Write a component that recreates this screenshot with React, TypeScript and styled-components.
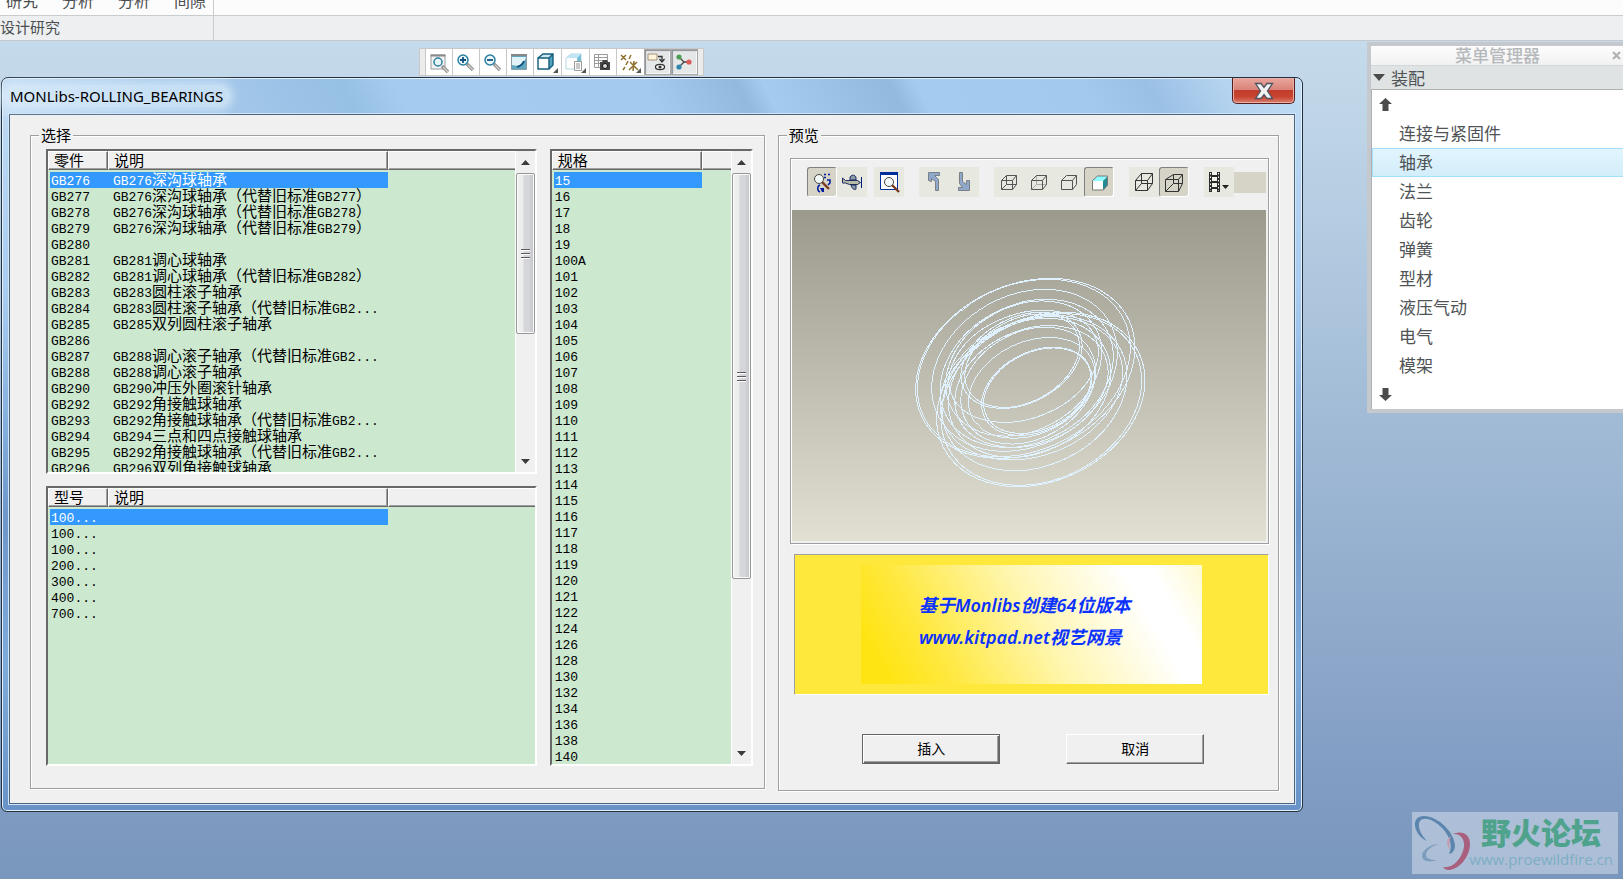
import React from "react";
import styled, { createGlobalStyle, css } from "styled-components";

const uiFont = `"Noto Sans", "Noto Sans CJK SC", sans-serif`;
const cjkFont = `"Noto Sans CJK SC", sans-serif`;

const GlobalStyle = createGlobalStyle`
  *, *::before, *::after { box-sizing: border-box; }
  body { margin: 0; font-family: ${cjkFont}; }
  button { font: inherit; color: inherit; padding: 0; margin: 0; border: 0; background: none; }
`;

/* ---------- page ---------- */

const Page = styled.div`
  position: relative;
  display: flex;
  flex-direction: column;
  min-height: 100vh;
  overflow: hidden;
  background: linear-gradient(#c8dded 0%, #c0d6e8 12%, #a1bbd6 48%, #829dc3 88%, #7996bc 100%);
`;

const Ribbon = styled.header`
  flex: none;
  color: #4c4f52;
  background: #edeff1;
  border-bottom: 1px solid #c5c8ca;
`;

const RibbonRow = styled.div<{ $upper?: boolean }>`
  display: flex;
  overflow: hidden;
  height: ${(p) => (p.$upper ? 16 : 24)}px;
  background: ${(p) => (p.$upper ? "#fcfcfc" : "#edeff1")};
  border-bottom: ${(p) => (p.$upper ? "1px solid #c9cbcd" : "0")};
`;

const RibbonGroup = styled.div<{ $upper?: boolean }>`
  display: flex;
  width: 214px;
  gap: 24px;
  align-items: ${(p) => (p.$upper ? "flex-end" : "center")};
  padding: ${(p) => (p.$upper ? "0 0 7px 6px" : "0 0 2px")};
  border-right: 1px solid #c9cbcd;
  font-size: ${(p) => (p.$upper ? 16 : 15)}px;
  line-height: 16px;
  white-space: nowrap;
`;

const Desktop = styled.main`
  display: flex;
  align-items: flex-start;
  gap: 64px;
  padding-left: 1px;
`;

const Workspace = styled.div`
  flex: 1;
  min-width: 0;
  padding-top: 7px;
`;

/* ---------- view toolbar ---------- */

const ViewBar = styled.div`
  display: flex;
  width: max-content;
  height: 28px;
  margin: 0 0 1px 418px;
  padding: 0 5px 0 5px;
  background: #ececec;
  border: 1px solid #c8c8c8;
`;

const ViewButton = styled.button<{ $on?: boolean; $menu?: boolean }>`
  display: grid;
  place-items: center;
  width: ${(p) => (p.$menu ? 28 : 27)}px;
  height: 26px;
  background: #fff;
  border-left: 1px solid #c8c8c8;
  ${(p) =>
    p.$on &&
    css`
      background: #e6e7e8;
      border: 1px solid #a6a9ac;
      box-shadow: inset 1px 1px 1px #8b8e91, inset 0 0 0 1px #f7f7f7;
    `}
`;

/* ---------- dialog window ---------- */

const Dialog = styled.section`
  padding: 0 7px 7px;
  border: 1px solid #22303f;
  border-radius: 7px 7px 6px 6px;
  box-shadow: inset 0 0 0 1px #e4f1fc;
  background:
    linear-gradient(62deg, #c6def4 0%, #a9cbec 12%, #97c0e5 27%, #a5cbf0 31%, #a4caef 50%, #93b9de 57%, #a4cbf0 59%,
      #93b9de 68.5%, #a4cbf0 70.5%, #a4c9ef 83%, #9ac0e6 88%, #b5d4ef 94%, #c0dcf5 100%) top / 100% 38px no-repeat,
    linear-gradient(#c0dbf4 0%, #a9cbee 30%, #84addc 48%, #6d97c9 60%, #7fabdb 80%, #6993c7 100%);
`;

const TitleBar = styled.header`
  display: flex;
  justify-content: space-between;
  align-items: flex-start;
  height: 36px;
`;

const Title = styled.h1`
  margin: 7px 0 0 -6px;
  padding: 0 7px;
  border-radius: 12px;
  font: 400 15px/22px ${uiFont};
  color: #000;
  background: rgba(222, 238, 251, 0.6);
  box-shadow: 0 0 8px 4px rgba(222, 238, 251, 0.6);
`;

const CloseButton = styled.button`
  display: grid;
  place-items: center;
  width: 63px;
  height: 26px;
  border: 1px solid #561d1b;
  border-top: 0;
  border-radius: 0 0 5px 5px;
  box-shadow: inset 0 0 0 1px #e8b0a8;
  background: linear-gradient(#e9a79c 0%, #d9837a 46%, #bf3d2a 50%, #c94430 75%, #d98070 100%);
`;

const Client = styled.div`
  display: flex;
  align-items: flex-start;
  gap: 13px;
  padding: 12px 15px 12px 20px;
  background: #f0f0f0;
  border: 1px solid #4d6480;
  box-shadow: 0 0 0 1px #cfe4f7;
`;

const Group = styled.fieldset<{ $grow: number }>`
  flex: ${(p) => p.$grow} 1 0;
  min-width: 0;
  margin: 0;
  padding: 0;
  border: 1px solid #a0a0a0;
  box-shadow: inset 1px 1px #fff, 1px 1px #fff;
`;

const Legend = styled.legend`
  margin-left: 8px;
  padding: 0 2px;
  background: #f0f0f0;
  font-size: 15px;
  line-height: 16px;
`;

const Lists = styled.div`
  display: flex;
  gap: 13px;
  padding: 6px 11px 22px 15px;
`;

const ListStack = styled.div`
  display: flex;
  flex: 1;
  min-width: 0;
  flex-direction: column;
  gap: 12px;
`;

const ListBox = styled.div<{ $size: "tall" | "medium" | "short" }>`
  display: flex;
  overflow: hidden;
  flex: none;
  width: ${(p) => (p.$size === "tall" ? "203px" : "auto")};
  height: ${(p) => ({ tall: 617, medium: 325, short: 280 })[p.$size]}px;
  background: #cce8cf;
  border: 2px solid;
  border-color: #696969 #fff #fff #696969;
`;

const ListPane = styled.div`
  flex: 1;
  min-width: 0;
  overflow: hidden;
`;

const Table = styled.table`
  width: 100%;
  table-layout: fixed;
  border-collapse: separate;
  border-spacing: 0;
  font-size: 15px;
  line-height: 16px;
  color: #000;
  tbody::before {
    content: "";
    display: block;
    height: 2px;
  }
`;

const HeadCell = styled.th<{ $width?: number }>`
  width: ${(p) => (p.$width ? `${p.$width}px` : "auto")};
  height: 19px;
  padding: 0 5px 1px;
  font-weight: 400;
  text-align: left;
  background: #f0f0f0;
  border: 1px solid;
  border-color: #fff #696969 #696969 #fff;
  box-shadow: inset -1px -1px #a0a0a0;
  &:last-child {
    border-right: 0;
    box-shadow: inset 0 -1px #a0a0a0;
  }
`;

const Cell = styled.td<{ $selected?: boolean; $fill?: boolean }>`
  height: 16px;
  padding: 0 0 2px 5px;
  line-height: 14px;
  white-space: nowrap;
  &:first-child {
    padding-left: 1px;
    border-left: 2px solid #cce8cf;
  }
  ${(p) =>
    p.$selected &&
    !p.$fill &&
    css`
      color: #fff;
      background: #3399ff;
    `}
`;

const Latin = styled.span`
  font: 13px/0 "Liberation Mono", monospace;
`;

const ScrollTrack = styled.div`
  display: flex;
  flex-direction: column;
  flex: none;
  width: 20px;
  background: #f0f0f0;
  border-left: 1px solid #fff;
`;

const ScrollArrow = styled.button<{ $down?: boolean }>`
  display: grid;
  place-items: center;
  height: 22px;
  flex: none;
  margin-top: ${(p) => (p.$down ? "auto" : "0")};
  svg {
    transform: ${(p) => (p.$down ? "rotate(180deg)" : "none")};
  }
`;

const ScrollThumb = styled.div<{ $height: number }>`
  display: grid;
  place-items: center;
  flex: none;
  height: ${(p) => p.$height}px;
  border: 1px solid #979797;
  border-radius: 2px;
  box-shadow: inset 0 0 0 1px #fafafa;
  background: linear-gradient(90deg, #f3f3f3 0%, #ebebec 35%, #d6d7da 42%, #d3d5d9 70%, #c2c4c9 100%);
`;

/* ---------- preview ---------- */

const Preview = styled.div`
  padding: 15px 9px 26px 11px;
`;

const PreviewFrame = styled.div`
  padding: 0 2px 2px 1px;
  border: 1px solid #a0a0a0;
  box-shadow: inset 1px 1px #fff, 1px 1px #fff;
`;

const PreviewBar = styled.div`
  display: flex;
  gap: 15px;
  height: 51px;
  padding: 8px 0 0 15px;
`;

const ToolSet = styled.div<{ $tight?: boolean }>`
  display: flex;
  flex: none;
  margin-right: ${(p) => (p.$tight ? "-8px" : "0")};
`;

const ToolButton = styled.button<{ $on?: boolean }>`
  display: grid;
  place-items: center;
  width: 30px;
  height: 30px;
  background: #e7e8df;
  ${(p) =>
    p.$on &&
    css`
      background: #d6d3c7;
      border: 1px solid;
      border-color: #808080 #fff #fff #808080;
      border-radius: 3px;
    `}
`;

const BarFiller = styled.div`
  flex: 1;
  height: 21px;
  margin: 5px 0 0 -15px;
  background: #d6d3c7;
`;

const Viewport = styled.div`
  display: flex;
  justify-content: center;
  height: 331px;
  background: linear-gradient(#9b9a8d, #e2dfd3);
`;

const Banner = styled.div`
  display: grid;
  place-items: center;
  height: 141px;
  margin: 10px 0 39px 4px;
  background: #ffe83c;
  border: 1px solid;
  border-color: #a0a0a0 #fff #fff #a0a0a0;
`;

const BannerText = styled.p`
  width: 72%;
  height: 119px;
  margin: 0;
  padding: 24px 0 0 58px;
  font: italic 600 18px/32px ${uiFont};
  color: #0a32ff;
  white-space: nowrap;
  background: linear-gradient(60deg, #ffe414 8%, #ffe83c 22%, #fff6b0 52%, #ffffff 80%, #ffffff 87%, #fffad0 100%);
`;

const Actions = styled.div`
  display: flex;
  justify-content: center;
  gap: 66px;
  padding-left: 8px;
`;

const PushButton = styled.button<{ $primary?: boolean }>`
  width: 138px;
  height: 30px;
  padding-bottom: 2px;
  font-size: 14px;
  background: #f0f0f0;
  border: 1px solid;
  border-color: #fff #696969 #696969 #fff;
  box-shadow: inset -1px -1px #a0a0a0;
  ${(p) =>
    p.$primary &&
    css`
      border-color: #646464;
      box-shadow: inset 1px 1px #fff, inset -1px -1px #696969, inset -2px -2px #a0a0a0;
    `}
`;

/* ---------- menu manager ---------- */

const MenuPanel = styled.aside`
  flex: none;
  width: 256px;
  margin-top: 1px;
  border: 4px solid #c5c9cd;
  border-right: 0;
  color: #505356;
  font-size: 17px;
  line-height: 20px;
`;

const MenuTitle = styled.header`
  display: flex;
  align-items: center;
  justify-content: space-between;
  height: 20px;
  padding: 0 2px 1px 84px;
  color: #b6b9bc;
  font-weight: 500;
  background: linear-gradient(#fdfdfd, #f1f1f1);
  border-bottom: 1px solid #d3d7d9;
  h2 {
    margin: 0;
    font: inherit;
  }
  button {
    display: grid;
  }
`;

const MenuSection = styled.h3`
  display: flex;
  align-items: center;
  gap: 6px;
  height: 24px;
  margin: 0;
  padding-left: 2px;
  font: inherit;
  background: #dfe3e4;
  border-bottom: 1px solid #aeb1b3;
`;

const MenuBody = styled.div`
  background: #fff;
  border-left: 1px solid #aeb1b3;
`;

const MenuScroll = styled.button`
  display: flex;
  align-items: center;
  width: 100%;
  height: 29px;
  padding: 0 0 1px 7px;
`;

const MenuItem = styled.button<{ $active?: boolean }>`
  display: block;
  width: 100%;
  height: 29px;
  padding: 0 0 2px 26px;
  text-align: left;
  border: 1px solid transparent;
  border-right: 0;
  ${(p) =>
    p.$active &&
    css`
      border-color: #a3e0fb;
      background: linear-gradient(#e2f5fe, #d2edfa);
    `}
`;

/* ---------- watermark ---------- */

const Watermark = styled.a`
  position: absolute;
  right: 5px;
  bottom: 5px;
  display: flex;
  width: 206px;
  height: 62px;
  text-decoration: none;
  background: rgba(205, 217, 232, 0.6);
`;

const WatermarkText = styled.span`
  position: absolute;
  right: 5px;
  top: 1px;
  display: flex;
  flex-direction: column;
  align-items: flex-end;
`;

const WatermarkName = styled.strong`
  margin-right: 12px;
  font: 900 30px/36px ${cjkFont};
  color: #4fa38c;
`;

const WatermarkUrl = styled.span`
  font: 400 15px/20px "Open Sans", sans-serif;
  color: #7caec4;
`;

/* ---------- icons ---------- */

const Corner = () => <path d="M25 24v-5l-5 5z" fill="#555" />;

const Lens = ({ x = 0, y = 0, r = 5 }: { x?: number; y?: number; r?: number }) => (
  <g transform={`translate(${x} ${y})`}>
    <path d="M4 4l6 6" stroke="#8d8d8d" strokeWidth="3.4" />
    <path d="M5 5l5 5" stroke="#d4d0cb" strokeWidth="1.4" />
    <circle r={r} fill="#eaf7fb" stroke="#2b7f9f" strokeWidth="1.5" />
  </g>
);

const viewIcons: { label: string; on?: boolean; menu?: boolean; art: React.ReactNode }[] = [
  {
    label: "重新调整",
    art: (
      <>
        <path d="M6 6h14v14H6z" fill="#f4f4f4" stroke="#9a9a9a" />
        <path d="M5.500 6.500h15" stroke="#888" strokeWidth="2" />
        <Lens x={13} y={13} r={4} />
      </>
    ),
  },
  {
    label: "放大",
    art: (
      <>
        <Lens x={11} y={11} />
        <path d="M8 11h6M11 8v6" stroke="#124f7c" strokeWidth="1.8" />
      </>
    ),
  },
  {
    label: "缩小",
    art: (
      <>
        <Lens x={11} y={11} />
        <path d="M8 11h6" stroke="#124f7c" strokeWidth="1.8" />
      </>
    ),
  },
  {
    label: "重画",
    art: (
      <>
        <path d="M5.500 5.500h15v15h-15z" fill="#5fa8c2" stroke="#8b9ba3" />
        <path d="M6 8h14c-1 5-5 8-8 9l-6-1z" fill="#e1f3f8" />
        <path d="M5 6h16" stroke="#888" strokeWidth="2" />
        <path d="M18 12c-1 3-4 5-7 6" fill="none" stroke="#124f7c" strokeWidth="2" />
      </>
    ),
  },
  {
    label: "显示样式",
    menu: true,
    art: (
      <>
        <path d="M5 9l5-4h10v11l-4 4H5z" fill="#cdeaf4" />
        <path d="M16 9l4-4v11l-4 4z" fill="#55a5c0" />
        <path d="M5 9h11v11H5z" fill="#fff" />
        <path d="M5 9h11v11H5zM5 9l5-4h10v11l-4 4M16 9l4-4" fill="none" stroke="#155d7c" strokeWidth="1.4" />
        <Corner />
      </>
    ),
  },
  {
    label: "已保存方向",
    menu: true,
    art: (
      <>
        <path d="M5 9l5-4h10v11l-4 4H5z" fill="#fff" stroke="#b4d5e4" />
        <path d="M5 9l5-4h10l-4 4z" fill="#bfe6f2" />
        <path d="M16 9l4-4v11l-4 3z" fill="#79bfd6" />
        <path d="M13.500 12.500h7v9h-7z" fill="#fff" stroke="#9a9a9a" />
        <path d="M15 15h4M15 17h4M15 19h4" stroke="#777" strokeWidth="0.8" />
        <Corner />
      </>
    ),
  },
  {
    label: "视图管理器",
    art: (
      <>
        <path d="M5.500 5.500h13v13h-13z" fill="#fff" stroke="#9a9a9a" />
        <path d="M5 8.500h14M5 11.500h14M5 14.500h14M9.500 5v13" stroke="#9a9a9a" />
        <path d="M11 13h2l1-2h4l1 2h2v8H11z" fill="#444" />
        <circle cx="16" cy="17" r="2.5" fill="#ddd" stroke="#111" />
      </>
    ),
  },
  {
    label: "基准显示",
    menu: true,
    art: (
      <>
        <path
          d="M5 6l5 5M10 6l-5 5M15 6l-2 4M12 12l-2 4M9 18l-2 3M14 13l8 8M21 13l-8 8M18 12l-1 10"
          stroke="#8f6f2c"
          strokeWidth="1.5"
        />
        <Corner />
      </>
    ),
  },
  {
    label: "注释显示",
    on: true,
    art: (
      <>
        <path d="M5 5h9v6H5z" fill="#fff4da" stroke="#a4917a" />
        <path d="M15 7.500h4v4M16.500 10l2.500 3 2.500-3" fill="none" stroke="#333" strokeWidth="1.3" />
        <ellipse cx="17" cy="18" rx="4.5" ry="2.6" fill="#fff" stroke="#333" strokeWidth="1.3" />
        <circle cx="17" cy="18" r="1.6" fill="#333" />
      </>
    ),
  },
  {
    label: "旋转中心",
    on: true,
    art: (
      <>
        <path d="M9 8l5 5-5 5M14 13h6" fill="none" stroke="#444" strokeWidth="1.3" />
        <circle cx="9" cy="8" r="2.6" fill="#4d9d55" />
        <circle cx="19" cy="13" r="2.6" fill="#dd5b5b" />
        <circle cx="9" cy="18" r="2.6" fill="#2f86ad" />
      </>
    ),
  },
];

const wire = { fill: "none", stroke: "#555", strokeWidth: 1 } as const;
const cubeOutline = "M7.500 13.500h11v9h-11zM7.500 13.500l5-5h10v9l-4 5M18.500 13.500l4-5";

const BrownLens = ({ x, y }: { x: number; y: number }) => (
  <g transform={`translate(${x} ${y})`}>
    <path d="M3 3l7 7" stroke="#7a3a22" strokeWidth="2.4" />
    <circle r="4.5" fill="#f4faf6" stroke="#444" />
  </g>
);

type Tool = { label: string; on?: boolean; art: React.ReactNode };
const toolSets: Tool[][] = [
  [
    {
      label: "动态缩放",
      on: true,
      art: (
        <>
          <path
            d="M17 7.500h2M21 7.500h2M17 10.500h2M20 13h3v3l-2 2M13 18c-3 1-3 6 0 7"
            fill="none"
            stroke="#001a9c"
            strokeWidth="1.5"
          />
          <path d="M13 21h4v4h-2z" fill="#001a9c" />
          <BrownLens x={12} y={12} />
        </>
      ),
    },
    {
      label: "飞行模式",
      art: (
        <>
          <path d="M5.500 11v5h3l4 1.500h8l3-2-3-2h-12z" fill="#b8bba8" stroke="#1c2b63" />
          <path d="M13 10c2-3 6-2 6 1v2h-6zM14 18h5v4c0 1-4 1-5-4z" fill="#8b9aa6" stroke="#1c2b63" />
          <path d="M24.500 10v11" stroke="#001a7c" />
        </>
      ),
    },
  ],
  [
    {
      label: "重新调整",
      art: (
        <>
          <path d="M6.500 6h17v16.500h-17z" fill="#fff" stroke="#002f9c" />
          <path d="M6 6.500h18" stroke="#002f9c" strokeWidth="3" />
          <BrownLens x={15} y={15} />
        </>
      ),
    },
  ],
  [
    { label: "上一个", art: <path d="M9.500 5.500h11v3h-5l4 4v11h-3v-9l-4-3v3l-3-1z" fill="#8fa8cb" stroke="#7b7f86" /> },
    { label: "下一个", art: <path d="M10.500 5.500h3v9l4 3v-4h3v10h-11v-3h4l-3-4z" fill="#8fa8cb" stroke="#7b7f86" /> },
  ],
  [
    { label: "线框", art: <path d={`${cubeOutline}M12.500 8.500v9h10M7.500 22.500l5-5`} {...wire} /> },
    {
      label: "隐藏线",
      art: (
        <>
          <path d="M12.500 8.500v9h10M7.500 22.500l5-5" fill="none" stroke="#aaa" />
          <path d={cubeOutline} {...wire} />
        </>
      ),
    },
    { label: "无隐藏线", art: <path d={cubeOutline} {...wire} /> },
    {
      label: "着色",
      on: true,
      art: (
        <>
          <path d="M8 14l5-5h11l-5 5z" fill="#8ffcff" />
          <path d="M19 14l5-5v9l-5 5z" fill="#218c94" />
          <path d="M8 14h11v9H8z" fill="#fff" />
          <path d="M8.500 13.500l5-4.500h10v9l-4 5h-11z" fill="none" stroke="#777" />
        </>
      ),
    },
  ],
  [
    {
      label: "正交",
      art: (
        <path
          d="M6.500 13.500h12v10h-12zM12.500 6.500h11v10h-11zM6.500 13.500l6-7M18.500 13.500l5-7M6.500 23.500l6-7M18.500 23.500l5-7"
          {...wire}
          stroke="#333"
        />
      ),
    },
    {
      label: "透视",
      on: true,
      art: (
        <path
          d="M6.500 12.500h13v12h-13zM14.500 7.500h9v9h-9zM6.500 12.500l8-5M19.500 12.500l4-5M6.500 24.500l8-8M19.500 24.500l4-8"
          {...wire}
          stroke="#333"
        />
      ),
    },
  ],
  [
    {
      label: "动画",
      art: (
        <>
          <path d="M5 5h11v20H5z" fill="#2b2b2b" />
          <path d="M8 5h5v3H8zM8 10h5v4H8zM8 16h5v4H8zM8 22h5v3H8z" fill="#f2f2e8" />
          <path d="M6.500 6v18M14.500 6v18" stroke="#fff" strokeDasharray="1.5 2" />
          <path d="M18 18h7l-3.500 4z" fill="#222" />
        </>
      ),
    },
  ],
];

/* Each ring: left, right, top and bottom extents and the tilt correlation. */
const rings: number[][] = [
  [107, 765, 85, 625, 0.23],
  [112, 751, 88, 620, 0.23],
  [155, 712, 118, 604, 0.22],
  [180, 700, 148, 592, 0.23],
  [197, 665, 153, 558, 0.24],
  [207, 655, 181, 517, 0.26],
  [243, 606, 187, 475, 0.32],
  [255, 598, 192, 472, 0.32],
  [170, 795, 187, 710, 0.22],
  [183, 785, 191, 706, 0.22],
  [186, 741, 196, 662, 0.22],
  [180, 728, 200, 630, 0.22],
  [205, 692, 205, 622, 0.22],
  [225, 684, 227, 592, 0.24],
  [243, 647, 232, 582, 0.25],
  [265, 645, 262, 565, 0.28],
  [305, 635, 292, 556, 0.3],
  [311, 633, 294, 550, 0.3],
];

function ringProps([l, r, t, b, rho]: number[]) {
  const w = (r - l) / 6;
  const h = (b - t) / 6;
  const sum = (w * w + h * h) / 2;
  const diff = (w * w - h * h) / 2;
  const cross = rho * w * h;
  const root = Math.hypot(diff, cross);
  const angle = (-Math.atan2(cross, diff) * 90) / Math.PI;
  return {
    rx: Math.sqrt(sum + root),
    ry: Math.sqrt(sum - root),
    transform: `translate(${(l + r) / 6} ${(t + b) / 6}) rotate(${angle})`,
  };
}

/* ---------- data ---------- */

const parts: [string, string][] = [
  ["GB276", "GB276深沟球轴承"],
  ["GB277", "GB276深沟球轴承（代替旧标准GB277）"],
  ["GB278", "GB276深沟球轴承（代替旧标准GB278）"],
  ["GB279", "GB276深沟球轴承（代替旧标准GB279）"],
  ["GB280", ""],
  ["GB281", "GB281调心球轴承"],
  ["GB282", "GB281调心球轴承（代替旧标准GB282）"],
  ["GB283", "GB283圆柱滚子轴承"],
  ["GB284", "GB283圆柱滚子轴承（代替旧标准GB2..."],
  ["GB285", "GB285双列圆柱滚子轴承"],
  ["GB286", ""],
  ["GB287", "GB288调心滚子轴承（代替旧标准GB2..."],
  ["GB288", "GB288调心滚子轴承"],
  ["GB290", "GB290冲压外圈滚针轴承"],
  ["GB292", "GB292角接触球轴承"],
  ["GB293", "GB292角接触球轴承（代替旧标准GB2..."],
  ["GB294", "GB294三点和四点接触球轴承"],
  ["GB295", "GB292角接触球轴承（代替旧标准GB2..."],
  ["GB296", "GB296双列角接触球轴承"],
];

const models = ["100...", "100...", "100...", "200...", "300...", "400...", "700..."].map((m) => [m, ""]);

const specs = (
  "15 16 17 18 19 100A 101 102 103 104 105 106 107 108 109 110 111 112 113 114 115 116 117 118 119 " +
  "120 121 122 124 126 128 130 132 134 136 138 140"
)
  .split(" ")
  .map((s) => [s]);

const menuItems = ["连接与紧固件", "轴承", "法兰", "齿轮", "弹簧", "型材", "液压气动", "电气", "模架"];

/* ---------- parts ---------- */

const Mixed = ({ text }: { text: string }) => (
  <>
    {text
      .split(/([A-Z0-9.]+)/)
      .filter(Boolean)
      .map((run, i) => (/^[A-Z0-9.]/.test(run) ? <Latin key={i}>{run}</Latin> : run))}
  </>
);

const DataTable = ({ heads, rows }: { heads: [string, number][]; rows: string[][] }) => (
  <Table>
    <thead>
      <tr>
        {heads.map(([name, width]) => (
          <HeadCell key={name} $width={width}>
            {name}
          </HeadCell>
        ))}
        <HeadCell aria-hidden />
      </tr>
    </thead>
    <tbody>
      {rows.map((row, i) => (
        <tr key={i} aria-selected={i === 0}>
          {row.map((value, j) => (
            <Cell key={j} $selected={i === 0}>
              <Mixed text={value} />
            </Cell>
          ))}
          <Cell $fill />
        </tr>
      ))}
    </tbody>
  </Table>
);

const Arrow = () => (
  <svg width="9" height="5" viewBox="0 0 9 5">
    <path d="M0 5L4.500 0 9 5z" fill="#3c3c3c" />
  </svg>
);

const Scrollbar = ({ thumb }: { thumb: number }) => (
  <ScrollTrack>
    <ScrollArrow aria-label="向上滚动">
      <Arrow />
    </ScrollArrow>
    <ScrollThumb $height={thumb}>
      <svg width="9" height="11" viewBox="0 0 9 11">
        <path d="M0 1.500h9M0 5.500h9M0 9.500h9" stroke="#5b5b5b" />
        <path d="M0 2.500h9M0 6.500h9M0 10.500h9" stroke="#fff" />
      </svg>
    </ScrollThumb>
    <ScrollArrow $down aria-label="向下滚动">
      <Arrow />
    </ScrollArrow>
  </ScrollTrack>
);

const BlockArrow = ({ down }: { down?: boolean }) => (
  <svg width="13" height="13" viewBox="0 0 13 13">
    <path d={down ? "M3.500 0h6v7H13l-6.500 6L0 7h3.500z" : "M3.500 13h6V6H13L6.500 0 0 6h3.500z"} fill="#4b4b4b" />
  </svg>
);

export default function App() {
  return (
    <Page>
      <GlobalStyle />
      <Ribbon>
        <RibbonRow $upper>
          <RibbonGroup $upper>
            <span>研究</span>
            <span>分析</span>
            <span>分析</span>
            <span>间隙</span>
          </RibbonGroup>
        </RibbonRow>
        <RibbonRow>
          <RibbonGroup>设计研究</RibbonGroup>
        </RibbonRow>
      </Ribbon>

      <Desktop>
        <Workspace>
          <ViewBar role="toolbar" aria-label="视图">
            {viewIcons.map((icon) => (
              <ViewButton key={icon.label} $on={icon.on} $menu={icon.menu} aria-label={icon.label}>
                <svg width="25" height="25" viewBox="2 1 25 25">
                  {icon.art}
                </svg>
              </ViewButton>
            ))}
          </ViewBar>

          <Dialog role="dialog" aria-labelledby="dialog-title">
            <TitleBar>
              <Title id="dialog-title">MONLibs-ROLLING_BEARINGS</Title>
              <CloseButton aria-label="关闭">
                <svg width="20" height="18" viewBox="0 0 20 18">
                  <path
                    d="M1.500 1.500h5.500l3 4 3-4h5.500L13.500 9l5 7.500H13l-3-4-3 4H1.500l5-7.500z"
                    fill="#f2f2f2"
                    stroke="#4e5363"
                    strokeWidth="1.3"
                  />
                </svg>
              </CloseButton>
            </TitleBar>

            <Client>
              <Group $grow={735}>
                <Legend>选择</Legend>
                <Lists>
                  <ListStack>
                    <ListBox $size="medium">
                      <ListPane>
                        <DataTable heads={[["零件", 60], ["说明", 280]]} rows={parts} />
                      </ListPane>
                      <Scrollbar thumb={161} />
                    </ListBox>
                    <ListBox $size="short">
                      <ListPane>
                        <DataTable heads={[["型号", 60], ["说明", 280]]} rows={models} />
                      </ListPane>
                    </ListBox>
                  </ListStack>
                  <ListBox $size="tall">
                    <ListPane>
                      <DataTable heads={[["规格", 150]]} rows={specs} />
                    </ListPane>
                    <Scrollbar thumb={406} />
                  </ListBox>
                </Lists>
              </Group>

              <Group $grow={501}>
                <Legend>预览</Legend>
                <Preview>
                  <PreviewFrame>
                    <PreviewBar role="toolbar" aria-label="预览">
                      {toolSets.map((set, i) => (
                        <ToolSet key={i} $tight={i === 0}>
                          {set.map((tool) => (
                            <ToolButton key={tool.label} $on={tool.on} aria-label={tool.label}>
                              <svg width="28" height="28" viewBox="1 1 28 28">
                                {tool.art}
                              </svg>
                            </ToolButton>
                          ))}
                        </ToolSet>
                      ))}
                      <BarFiller />
                    </PreviewBar>
                    <Viewport>
                      <svg width="474" height="331" viewBox="-88 -40 474 331" role="img" aria-label="轴承模型">
                        {rings.map((ring, i) => (
                          <ellipse
                            key={i}
                            {...ringProps(ring)}
                            fill="none"
                            stroke="#e0f2ff"
                            shapeRendering="crispEdges"
                          />
                        ))}
                      </svg>
                    </Viewport>
                  </PreviewFrame>
                  <Banner>
                    <BannerText>
                      基于Monlibs创建64位版本
                      <br />
                      www.kitpad.net视艺网景
                    </BannerText>
                  </Banner>
                  <Actions>
                    <PushButton $primary>插入</PushButton>
                    <PushButton>取消</PushButton>
                  </Actions>
                </Preview>
              </Group>
            </Client>
          </Dialog>
        </Workspace>

        <MenuPanel>
          <MenuTitle>
            <h2>菜单管理器</h2>
            <button aria-label="关闭菜单管理器">
              <svg width="9" height="9" viewBox="0 0 9 9">
                <path d="M1 1l7 7M8 1L1 8" stroke="#b0b3b6" strokeWidth="2.2" />
              </svg>
            </button>
          </MenuTitle>
          <MenuSection>
            <svg width="12" height="7" viewBox="0 0 12 7">
              <path d="M0 0h12L6 7z" fill="#4b4b4b" />
            </svg>
            装配
          </MenuSection>
          <MenuBody>
            <MenuScroll aria-label="上移">
              <BlockArrow />
            </MenuScroll>
            {menuItems.map((item) => (
              <MenuItem key={item} $active={item === "轴承"}>
                {item}
              </MenuItem>
            ))}
            <MenuScroll aria-label="下移">
              <BlockArrow down />
            </MenuScroll>
          </MenuBody>
        </MenuPanel>
      </Desktop>

      <Watermark href="http://www.proewildfire.cn">
        <svg width="62" height="62" viewBox="0 0 62 62">
          <path
            fillRule="evenodd"
            d="M3 14C2 5 9 2 18 5c13 4 24 17 25 28 0 5-2 8-6 9 4-8 1-17-6-25C23 8 12 4 8 9c-3 4 0 13 7 20C8 26 4 20 3 14z"
            fill="#5b85ad"
          />
          <path d="M41 22c9-4 17 0 17 10 0 12-10 25-21 26-3 0-5-1-6-3 9 2 19-8 21-20 1-8-4-14-11-13z" fill="#a9607f" />
          <path d="M27 32c-8 0-17 6-17 12 0 5 7 7 15 4-6 0-11-1-11-5 0-5 6-9 13-11z" fill="#7d9dbd" />
          <path d="M38 38c-4-6-4-10 1-14-2 5-2 9-1 14z" fill="#c79aac" />
        </svg>
        <WatermarkText>
          <WatermarkName>野火论坛</WatermarkName>
          <WatermarkUrl>www.proewildfire.cn</WatermarkUrl>
        </WatermarkText>
      </Watermark>
    </Page>
  );
}
